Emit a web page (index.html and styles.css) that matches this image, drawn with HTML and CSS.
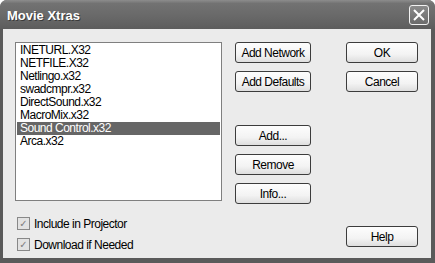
FILE: index.html
```html
<!DOCTYPE html>
<html lang="en">
<head>
  <meta charset="UTF-8">
  <title>Movie Xtras</title>
  <link rel="stylesheet" href="styles.css">
</head>
<body>
  <div class="window">
    <div class="titlebar">
      <span class="title">Movie Xtras</span>
      <span class="close">
        <svg width="12" height="12" viewBox="0 0 12 12"><path d="M1 1 L11 11 M11 1 L1 11" stroke="#fff" stroke-width="2"/></svg>
      </span>
    </div>

    <div class="content">
      <div class="left">
        <ul class="list">
          <li>INETURL.X32</li>
          <li>NETFILE.X32</li>
          <li>Netlingo.x32</li>
          <li>swadcmpr.x32</li>
          <li>DirectSound.x32</li>
          <li>MacroMix.x32</li>
          <li class="selected">Sound Control.x32</li>
          <li>Arca.x32</li>
        </ul>
        <label class="check"><span class="box">&#10003;</span>Include in Projector</label>
        <label class="check"><span class="box">&#10003;</span>Download if Needed</label>
      </div>

      <div class="middle">
        <button>Add Network</button>
        <button>Add Defaults</button>
        <button class="spaced">Add...</button>
        <button>Remove</button>
        <button>Info...</button>
      </div>

      <div class="right">
        <button>OK</button>
        <button>Cancel</button>
        <button class="bottom">Help</button>
      </div>
    </div>
  </div>
</body>
</html>
```

FILE: styles.css
```css
body {
  margin: 0;
  background: #fff;
  font-family: 'Liberation Sans', Arial, sans-serif;
}
.window {
  width: 435px;
  height: 263px;
  box-sizing: border-box;
  background: #5a5a5a;
  border-radius: 7px 7px 0 0;
  display: flex;
  flex-direction: column;
  overflow: hidden;
}
.titlebar {
  height: 29px;
  flex: none;
  display: flex;
  align-items: center;
  justify-content: space-between;
  padding: 0 6px 0 7px;
  box-sizing: border-box;
  background: linear-gradient(to bottom, #8c8c8c 0%, #727272 12%, #6a6a6a 50%, #616161 85%, #5c5c5c 100%);
}
.title {
  color: #fff;
  font-weight: bold;
  font-size: 13px;
  text-shadow: 1px 1px 0 #3a3a3a;
  padding-top: 1px;
}
.close {
  width: 20px;
  height: 20px;
  box-sizing: border-box;
  border: 1px solid #f2f2f2;
  border-radius: 3px;
  background: linear-gradient(to bottom, #8a8a8a, #6c6c6c);
  display: flex;
  align-items: center;
  justify-content: center;
}
.content {
  flex: 1;
  margin: 0 4px 5px 3px;
  background: #ebebeb;
  display: flex;
  padding: 13px 13px 0 12px;
  font-size: 12px;
  letter-spacing: -0.5px;
  color: #000;
}
.left {
  width: 207px;
  display: flex;
  flex-direction: column;
}
.list {
  list-style: none;
  margin: 0;
  height: 159px;
  box-sizing: border-box;
  padding: 1px;
  background: #fff;
  border: 1px solid #7f7f7f;
}
.list li {
  height: 13px;
  line-height: 13px;
  padding-left: 3px;
}
.list li.selected {
  background: #666;
  color: #fff;
}
.check {
  display: flex;
  align-items: center;
  height: 13px;
  margin-top: 8px;
  padding-left: 2px;
}
.check:first-of-type {
  margin-top: 16px;
}
.box {
  width: 11px;
  height: 11px;
  border: 1px solid #888;
  background: #e2e2e2;
  color: #7e7e7e;
  font-size: 10px;
  letter-spacing: 0;
  line-height: 11px;
  text-align: center;
  margin-right: 4px;
  font-family: 'DejaVu Sans', sans-serif;
  font-weight: bold;
}
.middle, .right {
  display: flex;
  flex-direction: column;
  gap: 8px;
}
.middle {
  width: 76px;
  margin-left: 13px;
}
.right {
  width: 72px;
  margin-left: 35px;
}
button {
  height: 21px;
  padding: 0;
  border: 1px solid #3c3c3c;
  border-radius: 3px;
  background: linear-gradient(to bottom, #fdfdfd 0%, #f3f3f3 60%, #dedede 100%);
  font-family: 'Liberation Sans', Arial, sans-serif;
  font-size: 12px;
  letter-spacing: -0.5px;
  color: #000;
}
.spaced {
  margin-top: 25px;
}
.bottom {
  margin-top: 126px;
}
```
